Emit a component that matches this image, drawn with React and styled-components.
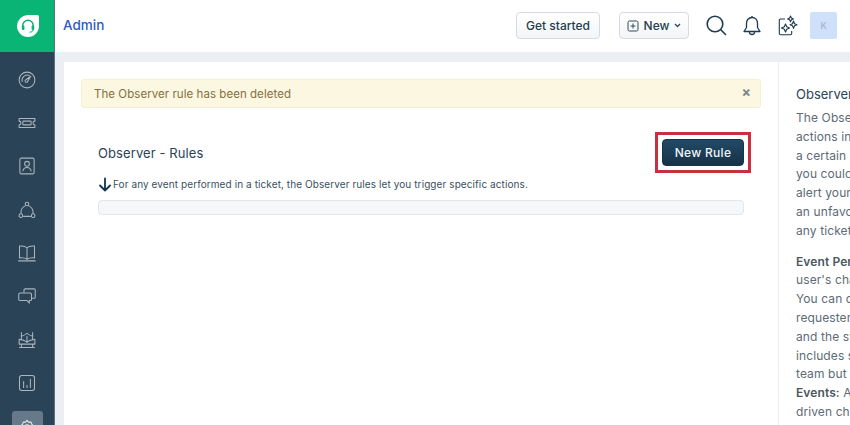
import React from "react";
import styled, { createGlobalStyle } from "styled-components";

const Global = createGlobalStyle`
  html, body { margin: 0; padding: 0; height: 425px; overflow: hidden; background: #ebeff3; }
  #root { height: 425px; }
  * { box-sizing: border-box; }
  body { font-family: Inter, "Liberation Sans", sans-serif; -webkit-font-smoothing: antialiased; }
`;

const Shell = styled.div`
  display: flex;
  width: 850px;
  height: 425px;
  overflow: hidden;
`;
const Sidebar = styled.nav`
  flex: 0 0 55px;
  background: #2a4356;
  border-right: 1px solid #5d7183;
  display: flex;
  flex-direction: column;
  align-items: center;
  overflow: hidden;
`;
const LogoBlock = styled.div`
  flex: 0 0 52px;
  width: 55px;
  margin-right: -1px;
  background: #0ab474;
  display: flex;
  align-items: center;
  justify-content: center;
`;
const NavList = styled.div`
  display: flex;
  flex-direction: column;
  gap: 11.4px;
  padding-top: 11.5px;
`;
const NavItem = styled.div`
  flex: 0 0 32px;
  width: 31px;
  height: 32px;
  border-radius: 3px;
  display: flex;
  align-items: center;
  justify-content: center;
  background: ${(p) => (p.$active ? "#66798a" : "transparent")};
  color: ${(p) => (p.$active ? "#e6eaed" : "#aab5bf")};
`;
const Column = styled.div`
  flex: 1;
  min-width: 0;
  display: flex;
  flex-direction: column;
`;
const Header = styled.header`
  flex: 0 0 52px;
  background: #fff;
  display: flex;
  align-items: center;
  padding: 0 13px 1px 8px;
`;
const PageName = styled.div`
  font-size: 13.5px;
  font-weight: 500;
  color: #2c5cc5;
  margin-right: auto;
  padding-bottom: 2px;
`;
const HeadButton = styled.button`
  height: 27px;
  padding: 0;
  width: ${(p) => p.$w}px;
  margin-right: ${(p) => p.$mr}px;
  font: 500 12px Inter, sans-serif;
  color: #253d4f;
  border: 1px solid #d5dbe1;
  border-radius: 4px;
  background: linear-gradient(#fff, #f3f5f7);
  display: flex;
  align-items: center;
  justify-content: center;
  gap: 5px;
`;
const HeadIcon = styled.span`
  display: flex;
  width: ${(p) => p.$w}px;
  margin-right: ${(p) => p.$mr}px;
  color: #1e3a4c;
`;
const Avatar = styled.div`
  width: 27px;
  height: 27px;
  background: #cfe0fb;
  border-radius: 2px;
  color: #a3b4c8;
  font-size: 9px;
  font-weight: 500;
  display: flex;
  align-items: center;
  justify-content: center;
`;
const Body = styled.div`
  flex: 1;
  min-height: 0;
  padding: 10px 0 0 9px;
  background: #ebeff3;
`;
const Card = styled.main`
  background: #fff;
  height: 100%;
  display: flex;
  overflow: hidden;
`;
const Content = styled.section`
  flex: 0 0 715px;
  padding: 17px 17px 0;
  border-right: 1px solid #ebeff3;
`;
const Alert = styled.div`
  height: 29px;
  background: #fbf7e1;
  border: 1px solid #f6efd3;
  border-radius: 3px;
  padding: 0 9px 0 12px;
  display: flex;
  align-items: center;
  justify-content: space-between;
  font-size: 11.5px;
  color: #85703f;
  letter-spacing: 0.05px;
`;
const Close = styled.span`
  font-size: 14px;
  font-weight: 700;
  color: #7c8791;
  line-height: 1;
  margin-top: -3px;
`;
const Rules = styled.div`
  padding: 31px 17px 0;
`;
const TitleRow = styled.div`
  display: flex;
  align-items: center;
  justify-content: space-between;
  height: 27px;
`;
const Title = styled.h1`
  margin: 1px 0 0;
  font-size: 13px;
  font-weight: 400;
  color: #2a4356;
  letter-spacing: 0.1px;
`;
const Highlight = styled.div`
  border: 3px solid #c8303f;
  padding: 4px;
  margin-right: -7px;
  display: flex;
`;
const PrimaryButton = styled.button`
  width: 82px;
  height: 27px;
  padding: 0;
  font: 500 12px Inter, sans-serif;
  letter-spacing: 0.3px;
  color: #f2f5f7;
  background: linear-gradient(#214a66, #183247);
  border: 1px solid #12344d;
  border-radius: 4px;
`;
const Hint = styled.p`
  margin: 8px 0 0;
  display: flex;
  align-items: center;
  gap: 1px;
  height: 20px;
  font-size: 10px;
  color: #3a5060;
  letter-spacing: 0.09px;
`;
const EmptyBar = styled.div`
  margin-top: 6px;
  height: 15px;
  background: #f5f7f9;
  border: 1px solid #e3e7eb;
  border-radius: 4px;
`;
const Help = styled.aside`
  flex: 1;
  min-width: 0;
  padding: 23px 0 0 17px;
  overflow: hidden;
  white-space: nowrap;
`;
const HelpTitle = styled.h2`
  margin: 0 0 6px;
  font-size: 13px;
  line-height: 18px;
  font-weight: 400;
  color: #2a4356;
`;
const HelpText = styled.p`
  margin: 0 0 ${(p) => p.$mb || 0}px;
  font-size: 12px;
  line-height: 18.8px;
  color: #5d6b76;
  letter-spacing: 0.1px;
`;
const Strong = styled.b`
  font-weight: 600;
  color: #4a5862;
`;

const S = ({ children, size = 18, sw = 1.4, vb = 24 }) => (
  <svg width={size} height={size} viewBox={`0 0 ${vb} ${vb}`} fill="none" stroke="currentColor" strokeWidth={sw} strokeLinecap="round" strokeLinejoin="round">
    {children}
  </svg>
);

const navIcons = [
  <S key="a"><circle cx="12" cy="12" r="10.500" /><path d="M5.500 14a7 7 0 0 1 9.500-8" /><path d="M17 7l-4 6.500a1.800 1.800 0 1 1-2.600-1.800z" /></S>,
  <S key="b"><path d="M1.500 6h21v3.500a2.500 2.500 0 0 0 0 5V18h-21v-3.500a2.500 2.500 0 0 0 0-5z" /><rect x="6.500" y="9.500" width="11" height="5" rx="1" /></S>,
  <S key="c"><rect x="2.500" y="1.500" width="19" height="21" rx="2" /><circle cx="12" cy="9" r="3.200" /><path d="M6.500 18.500c.6-3 2.800-4.500 5.500-4.500s4.900 1.500 5.500 4.500" /></S>,
  <S key="d"><circle cx="12" cy="4" r="2.400" /><circle cx="3.800" cy="19.500" r="2.400" /><circle cx="20.200" cy="19.500" r="2.400" /><path d="M9.500 6.500a10 10 0 0 0-5.500 10M14.500 6.500a10 10 0 0 1 5.500 10M7.500 20.500h9" /></S>,
  <S key="e"><path d="M12 5C10 3 6.500 2.500 2 2.800V18.500c4.500-.3 8 .2 10 1.800 2-1.600 5.500-2.100 10-1.800V2.800C17.500 2.500 14 3 12 5zM12 5V20.300M1 22.500h22" /></S>,
  <S key="f"><path d="M8 7V4A1.500 1.500 0 0 1 9.500 2.500h12A1.500 1.500 0 0 1 23 4v9.500a1.500 1.500 0 0 1-1.500 1.500H19" /><path d="M2.500 8h14A1.500 1.500 0 0 1 18 9.500v7a1.500 1.500 0 0 1-1.500 1.500H15v3.500L12 18H2.500A1.500 1.500 0 0 1 1 16.500v-7A1.500 1.500 0 0 1 2.500 8z" /></S>,
  <S key="g"><path d="M4.500 2v5c3-.8 5.500-2 7.500-4 2 2 4.500 3.200 7.500 4V2M4.500 7v4M19.500 7v4M1.500 11l6.500 1.500 4 2.500 4-2.500 6.500-1.500v6.500h-21zM4.500 17.500V22M19.500 17.500V22M2 22h20M12 7v8" /></S>,
  <S key="h"><rect x="2" y="2" width="20" height="20" rx="3" /><path d="M7.500 10v8M12 15v3M16.500 7v11" /></S>,
  <S key="i"><path d="M12 3l2 2.500h3.500l1 3 2.500 2-1 3.500 1 2.500-3 1.500-1 3H13l-1 1-1-1H7.500l-1-3-3-1.500 1-2.500-1-3.500 2.500-2 1-3H10z" /><circle cx="12" cy="12" r="3" /></S>,
];

export default function App() {
  return (
    <Shell>
      <Global />
      <Sidebar>
        <LogoBlock>
          <svg width="24" height="24" viewBox="0 0 24 24">
            <path d="M11.500 1h10A1.500 1.500 0 0 1 23 2.500V12a11 11 0 0 1-11 11A11 11 0 0 1 1 12 11 11 0 0 1 11.500 1z" fill="#fff" />
            <path d="M6.800 13v-1.500a5.200 5.200 0 0 1 10.400 0V13" fill="none" stroke="#0ab474" strokeWidth="1.500" />
            <rect x="5.800" y="11.500" width="2.600" height="4.600" rx="1" fill="#0ab474" />
            <rect x="15.600" y="11.500" width="2.600" height="4.600" rx="1" fill="#0ab474" />
            <path d="M17 16c0 1.500-1.500 2.200-3.500 2.200" fill="none" stroke="#0ab474" strokeWidth="1" />
          </svg>
        </LogoBlock>
        <NavList>
          {navIcons.map((ic, i) => (
            <NavItem key={i} $active={i === 8}>{ic}</NavItem>
          ))}
        </NavList>
      </Sidebar>
      <Column>
        <Header>
          <PageName>Admin</PageName>
          <HeadButton $w={84} $mr={19}>Get started</HeadButton>
          <HeadButton $w={70} $mr={17}>
            <svg width="12" height="12" viewBox="0 0 12 12" fill="none" stroke="#33495a" strokeWidth="1">
              <rect x="1" y="1" width="10" height="10" rx="1.500" />
              <path d="M6 3.500v5M3.500 6h5" />
            </svg>
            New
            <svg width="7" height="5" viewBox="0 0 7 5" fill="none" stroke="#33495a" strokeWidth="1.300">
              <path d="M1 1l2.500 2.500L6 1" />
            </svg>
          </HeadButton>
          <HeadIcon $w={21} $mr={16}>
            <svg width="21" height="21" viewBox="0 0 21 21" fill="none" stroke="currentColor" strokeWidth="1.600" strokeLinecap="round">
              <circle cx="9" cy="9" r="7.800" />
              <path d="M14.800 14.800L19.500 19.500" />
            </svg>
          </HeadIcon>
          <HeadIcon $w={18} $mr={17}>
            <svg width="18" height="21" viewBox="0 0 18 21" fill="none" stroke="currentColor" strokeWidth="1.300" strokeLinejoin="round">
              <path d="M9 2.500c-3.500 0-5.500 2.700-5.500 6v4L1 16.500h16l-2.500-4v-4c0-3.300-2-6-5.500-6z" />
              <path d="M9 1v1.500M6.500 17a2.500 2.500 0 0 0 5 0" />
            </svg>
          </HeadIcon>
          <HeadIcon $w={20} $mr={12}>
            <svg width="20" height="21" viewBox="0 0 20 21" fill="none" stroke="currentColor" strokeWidth="1.100" strokeLinejoin="round">
              <path d="M7 4H2.500A1.200 1.200 0 0 0 1.300 5.200v13.300a1.200 1.200 0 0 0 1.200 1.200h10a1.200 1.200 0 0 0 1.200-1.200V16" />
              <path d="M7.500 9l1.200 2.800 2.800 1.200-2.800 1.200L7.500 17l-1.200-2.800L3.500 13l2.800-1.200zM12.500 1l.9 2 2 .9-2 .9-.9 2-.9-2-2-.9 2-.9zM15.500 6l1 2.700L19 9.700l-2.500 1-1 2.700-1-2.700-2.500-1 2.500-1z" />
            </svg>
          </HeadIcon>
          <Avatar>K</Avatar>
        </Header>
        <Body>
          <Card>
            <Content>
              <Alert>
                The Observer rule has been deleted
                <Close>×</Close>
              </Alert>
              <Rules>
                <TitleRow>
                  <Title>Observer - Rules</Title>
                  <Highlight>
                    <PrimaryButton>New Rule</PrimaryButton>
                  </Highlight>
                </TitleRow>
                <Hint>
                  <svg width="14" height="15" viewBox="0 0 14 15" fill="none" stroke="#12344d" strokeWidth="1.800" strokeLinecap="round" strokeLinejoin="round">
                    <path d="M7 1.500v12M2 8.500l5 5 5-5" />
                  </svg>
                  For any event performed in a ticket, the Observer rules let you trigger specific actions.
                </Hint>
                <EmptyBar />
              </Rules>
            </Content>
            <Help>
              <HelpTitle>Observer Rules</HelpTitle>
              <HelpText>The Observer rule lets you</HelpText>
              <HelpText>actions in response to</HelpText>
              <HelpText>a certain event. For example,</HelpText>
              <HelpText>you could set up a rule to</HelpText>
              <HelpText>alert your team when</HelpText>
              <HelpText>an unfavorable rating is left on</HelpText>
              <HelpText $mb={12}>any ticket.</HelpText>
              <HelpText><Strong>Event Performer:</Strong> A</HelpText>
              <HelpText>user's change triggers the rule.</HelpText>
              <HelpText>You can choose the</HelpText>
              <HelpText>requester, an agent,</HelpText>
              <HelpText>and the system. This</HelpText>
              <HelpText>includes supervisors</HelpText>
              <HelpText>team but also others.</HelpText>
              <HelpText><Strong>Events:</Strong> A</HelpText>
              <HelpText>driven change</HelpText>
              <HelpText>Observer</HelpText>
            </Help>
          </Card>
        </Body>
      </Column>
    </Shell>
  );
}
